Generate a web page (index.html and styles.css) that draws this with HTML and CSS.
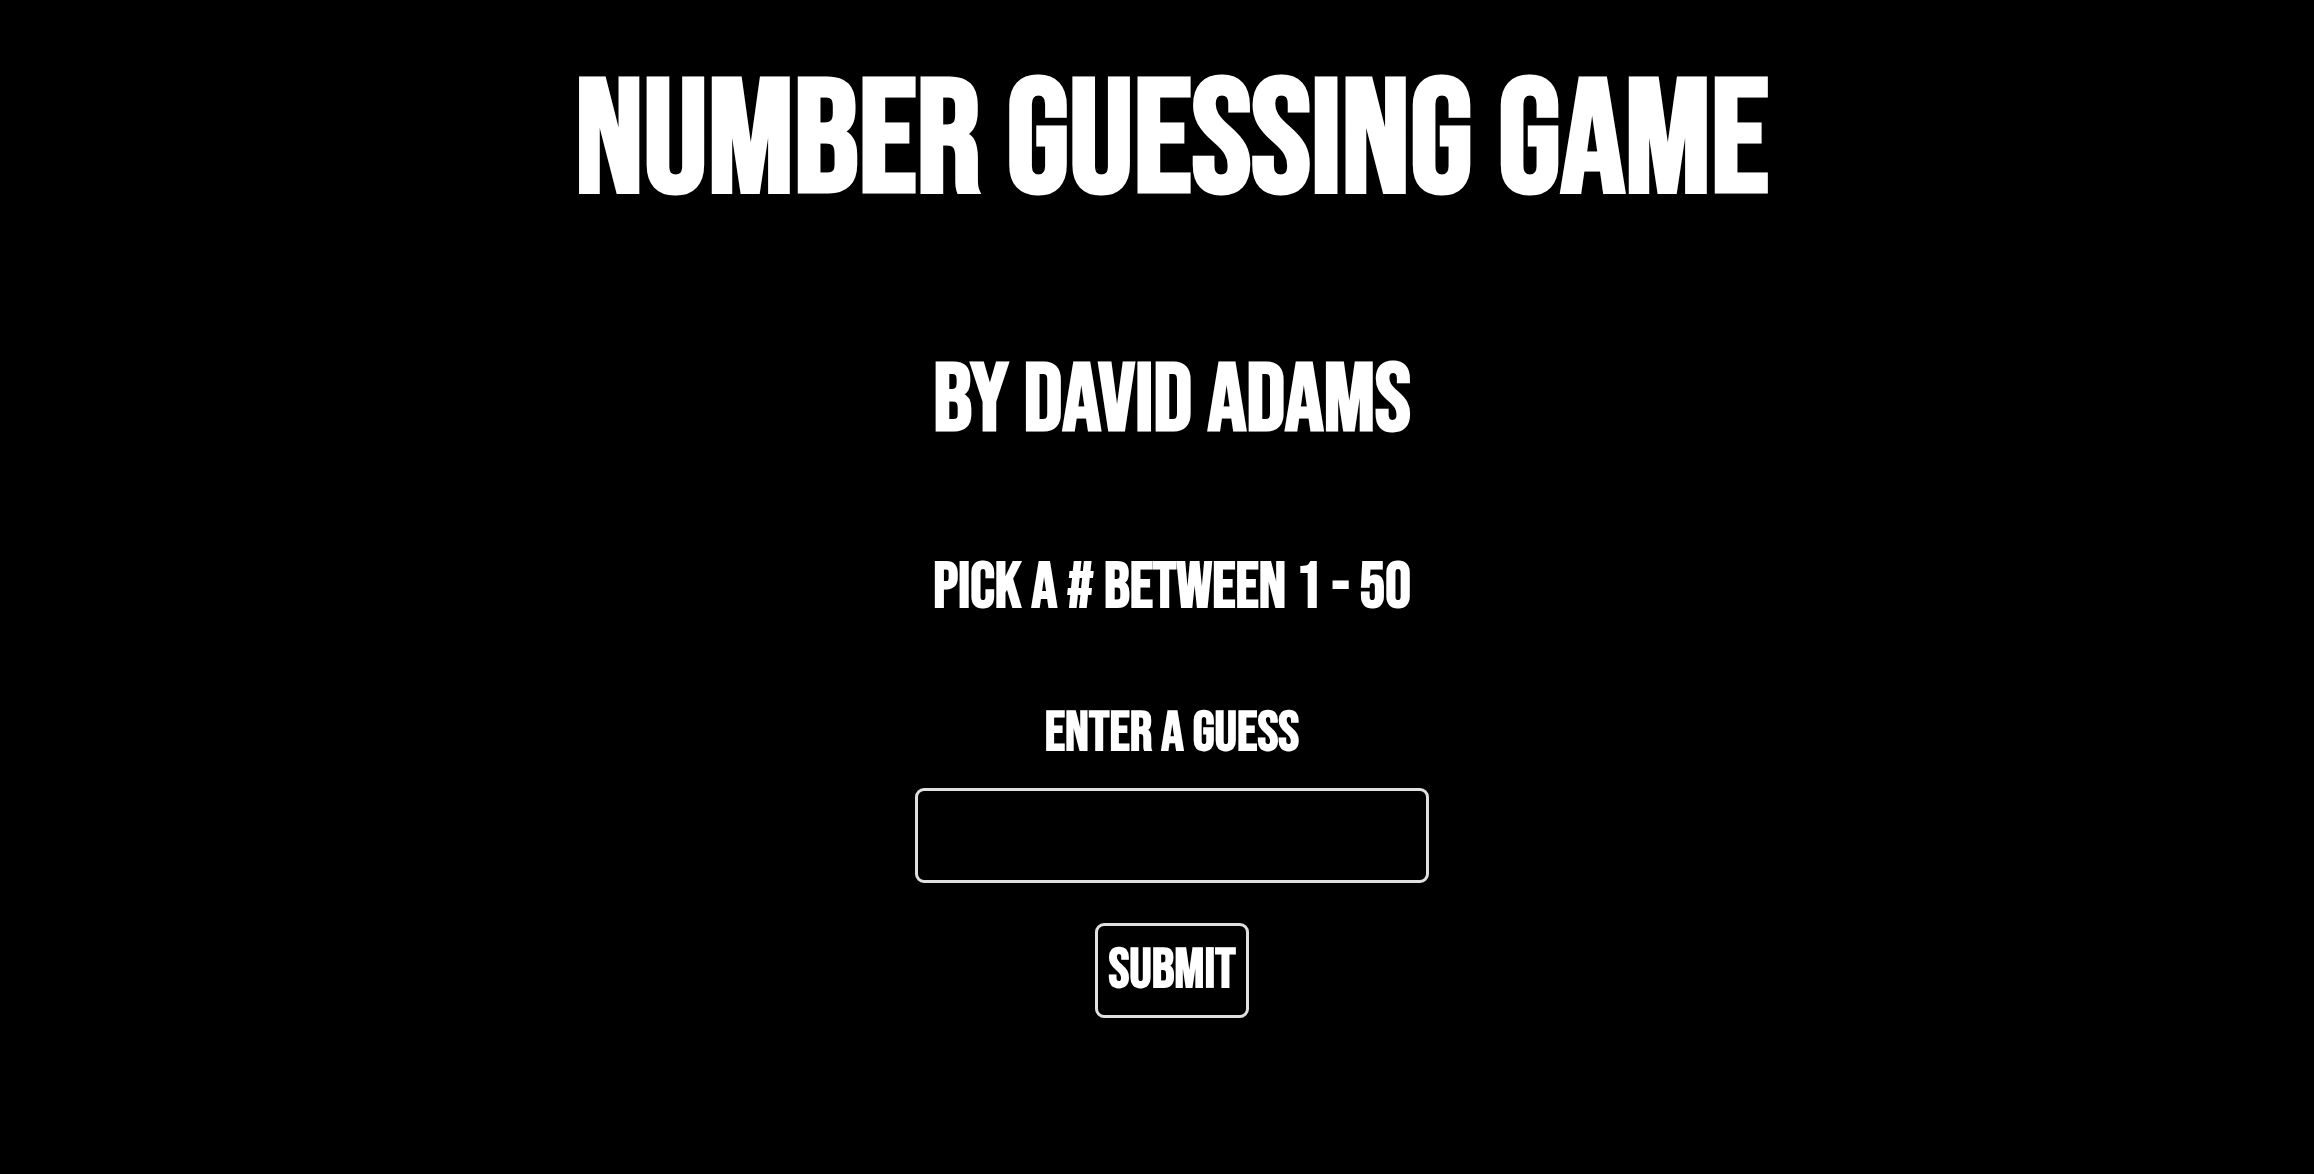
FILE: index.html
```html
<!DOCTYPE html>
<html>
<head>
<meta charset="utf-8">
<title>Number Guessing Game</title>
<link rel="stylesheet" href="styles.css">
</head>
<body>
<main class="game">
  <h1 class="title">NUMBER GUESSING GAME</h1>
  <h2 class="byline">BY DAVID ADAMS</h2>
  <h3 class="range">PICK A # BETWEEN 1 - 50</h3>
  <form class="guess-form">
    <label class="guess-label" for="guess">ENTER A GUESS</label>
    <input class="guess-input" id="guess" type="text">
    <button class="submit-btn" type="button">SUBMIT</button>
  </form>
</main>
</body>
</html>
```
FILE: styles.css
```css
body {
  margin: 0;
  background: #000;
  color: #fff;
  font-family: "Bebas Neue", "Oswald", sans-serif;
}

.game {
  display: flex;
  flex-direction: column;
  align-items: center;
  text-align: center;
  padding-left: 30px;
}

.title {
  font-size: 160px;
  line-height: 1;
  font-weight: 700;
  margin: 63px 0 0;
}

.byline {
  font-size: 96px;
  line-height: 1;
  font-weight: 700;
  margin: 131px 0 0;
}

.range {
  font-size: 64px;
  line-height: 1;
  font-weight: 700;
  margin: 106px 0 0;
}

.guess-form {
  display: flex;
  flex-direction: column;
  align-items: center;
  margin-top: 86px;
}

.guess-label {
  font-size: 56px;
  line-height: 1;
  font-weight: 700;
}

.guess-input {
  box-sizing: border-box;
  width: 514px;
  height: 95px;
  margin-top: 26px;
  background: #000;
  border: 3px solid #e0e0e0;
  border-radius: 9px;
  color: #fff;
  font-size: 40px;
  outline: none;
}

.submit-btn {
  box-sizing: border-box;
  width: 154px;
  height: 95px;
  margin-top: 40px;
  padding: 0;
  background: #000;
  border: 3px solid #e0e0e0;
  border-radius: 9px;
  color: #fff;
  font-family: "Bebas Neue", "Oswald", sans-serif;
  font-size: 56px;
  font-weight: 700;
  line-height: 1;
}
```
